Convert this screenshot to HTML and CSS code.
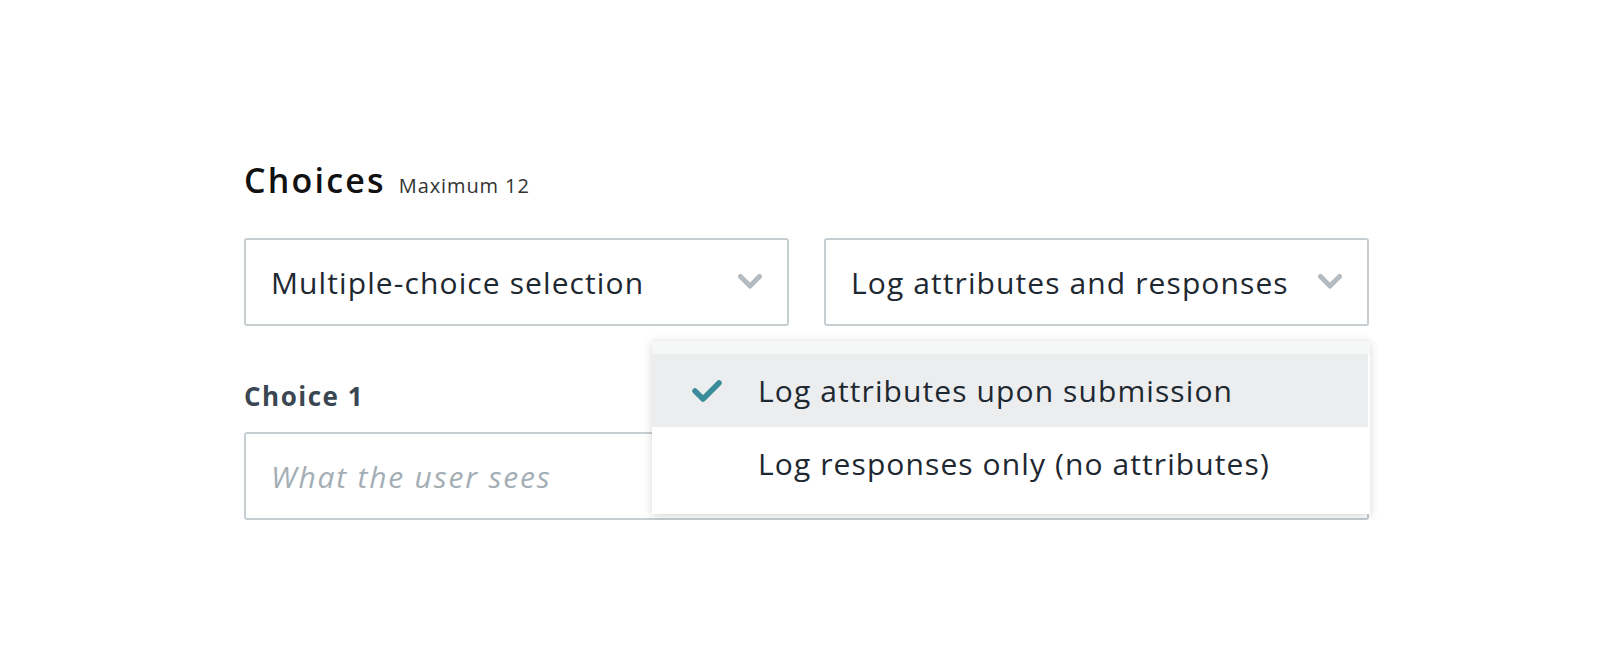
FILE: index.html
```html
<!DOCTYPE html>
<html lang="en">
<head>
    <meta charset="UTF-8">
    <meta name="viewport" content="width=device-width, initial-scale=1.0">
    <title>Choices</title>
    <link rel="stylesheet" href="styles.css">
</head>
<body>
    <div class="editor">
        <div class="section-title">
            <h2>Choices</h2>
            <span class="hint">Maximum 12</span>
        </div>

        <div class="select-row">
            <div class="select">
                <span class="select-value">Multiple-choice selection</span>
                <svg class="chevron" viewBox="0 0 26 18" width="26" height="18">
                    <path d="M3.5 3.5 L13 13 L22.5 3.5" fill="none" stroke="currentColor" stroke-width="5" stroke-linecap="round" stroke-linejoin="round"/>
                </svg>
            </div>
            <div class="select is-open">
                <span class="select-value">Log attributes and responses</span>
                <svg class="chevron" viewBox="0 0 26 18" width="26" height="18">
                    <path d="M3.5 3.5 L13 13 L22.5 3.5" fill="none" stroke="currentColor" stroke-width="5" stroke-linecap="round" stroke-linejoin="round"/>
                </svg>
                <ul class="menu">
                    <li class="menu-item selected">
                        <svg class="check" viewBox="0 0 32 24" width="32" height="24">
                            <path d="M4 12 L12 20 L28 4" fill="none" stroke="currentColor" stroke-width="5.5" stroke-linecap="round" stroke-linejoin="round"/>
                        </svg>
                        <span>Log attributes upon submission</span>
                    </li>
                    <li class="menu-item">
                        <span>Log responses only (no attributes)</span>
                    </li>
                </ul>
            </div>
        </div>

        <label class="field-label" for="choice1">Choice 1</label>
        <input class="text-input" id="choice1" type="text" placeholder="What the user sees">
    </div>
</body>
</html>
```

FILE: styles.css
```css
body {
    margin: 0;
    background: #fff;
    font-family: "Open Sans", Lato, sans-serif;
    color: #1e2831;
}

.editor {
    width: 1125px;
    margin-left: 244px;
    padding-top: 160px;
    display: flex;
    flex-direction: column;
}

.section-title {
    display: flex;
    align-items: baseline;
    gap: 13px;
}

.section-title h2 {
    margin: 0;
    font-size: 34px;
    font-weight: 600;
    letter-spacing: 2.2px;
    color: #111;
    line-height: 40px;
}

.hint {
    font-size: 20px;
    letter-spacing: 0.9px;
    color: #333;
}

.select-row {
    display: flex;
    gap: 35px;
    margin-top: 38px;
}

.select {
    position: relative;
    flex: 1;
    height: 88px;
    box-sizing: border-box;
    border: 2px solid #c7ced2;
    border-radius: 3px;
    display: flex;
    align-items: center;
    justify-content: space-between;
    padding: 0 24px 0 25px;
}

.select-value {
    font-size: 30px;
    letter-spacing: 1.1px;
}

.chevron {
    color: #b4bbc0;
    flex-shrink: 0;
}

.menu {
    position: absolute;
    top: calc(100% + 16px);
    right: -3px;
    width: 718px;
    margin: 0;
    padding: 13px 2px 14px 0;
    list-style: none;
    background: #fff;
    box-sizing: border-box;
    border-top: 1px solid #eef0f1;
    box-shadow: 0 2px 9px rgba(0, 0, 0, 0.16);
    z-index: 2;
}

.menu::before {
    content: "";
    position: absolute;
    top: 0;
    left: 0;
    right: 0;
    height: 13px;
    background: #f6f7f7;
}

.menu-item {
    height: 73px;
    display: flex;
    align-items: center;
    padding-left: 106px;
    position: relative;
    font-size: 30px;
    letter-spacing: 1.1px;
}

.menu-item.selected {
    background: #ebedee;
}

.check {
    position: absolute;
    left: 39px;
    top: 25px;
    color: #3a8c9b;
}

.field-label {
    margin-top: 52px;
    font-size: 26px;
    font-weight: 700;
    letter-spacing: 1.5px;
    color: #3a4753;
}

.text-input {
    margin-top: 18px;
    height: 88px;
    box-sizing: border-box;
    border: 2px solid #c7ced2;
    border-radius: 3px;
    padding: 0 25px;
    font-family: inherit;
    font-size: 30px;
    letter-spacing: 1.8px;
    color: #1e2831;
    outline: none;
}

.text-input::placeholder {
    color: #a4aeb5;
    font-style: italic;
}
```
